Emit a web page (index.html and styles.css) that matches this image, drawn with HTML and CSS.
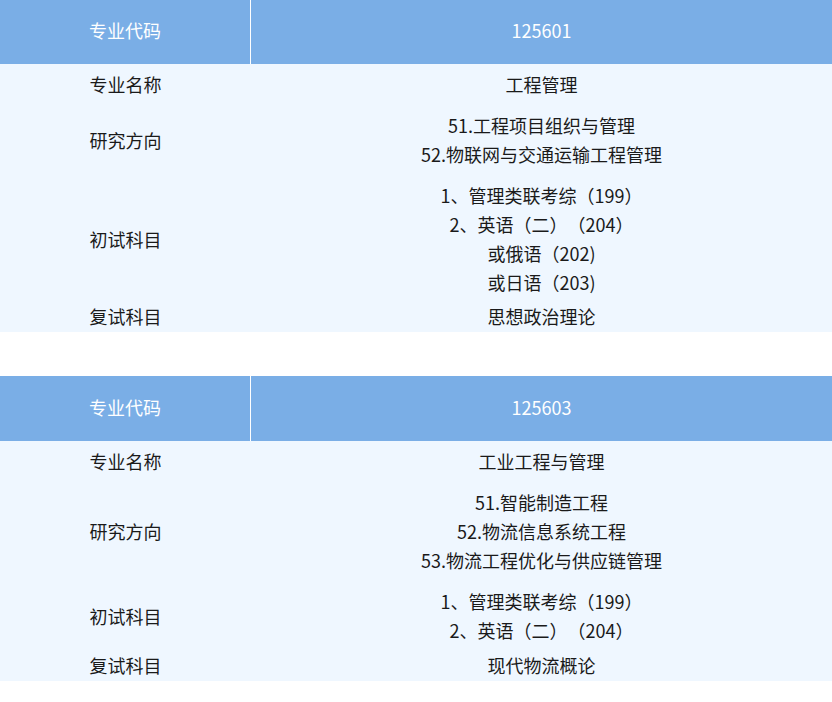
FILE: index.html
```html
<!DOCTYPE html>
<html lang="zh-CN">
<head>
<meta charset="utf-8">
<link rel="stylesheet" href="styles.css">
</head>
<body>
<div class="page">
  <div class="major">
    <div class="row head">
      <div class="label">专业代码</div>
      <div class="value">125601</div>
    </div>
    <div class="row">
      <div class="label">专业名称</div>
      <div class="value"><p>工程管理</p></div>
    </div>
    <div class="row">
      <div class="label">研究方向</div>
      <div class="value"><p>51.工程项目组织与管理</p><p>52.物联网与交通运输工程管理</p></div>
    </div>
    <div class="row">
      <div class="label">初试科目</div>
      <div class="value"><p>1、管理类联考综（199）</p><p>2、英语（二）（204）</p><p>或俄语（202)</p><p>或日语（203)</p></div>
    </div>
    <div class="row last">
      <div class="label">复试科目</div>
      <div class="value"><p>思想政治理论</p></div>
    </div>
  </div>

  <div class="major second">
    <div class="row head">
      <div class="label">专业代码</div>
      <div class="value">125603</div>
    </div>
    <div class="row">
      <div class="label">专业名称</div>
      <div class="value"><p>工业工程与管理</p></div>
    </div>
    <div class="row">
      <div class="label">研究方向</div>
      <div class="value"><p>51.智能制造工程</p><p>52.物流信息系统工程</p><p>53.物流工程优化与供应链管理</p></div>
    </div>
    <div class="row">
      <div class="label">初试科目</div>
      <div class="value"><p>1、管理类联考综（199）</p><p>2、英语（二）（204）</p></div>
    </div>
    <div class="row last">
      <div class="label">复试科目</div>
      <div class="value"><p>现代物流概论</p></div>
    </div>
  </div>
</div>
</body>
</html>
```

FILE: styles.css
```css
html, body {
  margin: 0;
  padding: 0;
  background: #ffffff;
}

.page {
  width: 832px;
  font-family: "Noto Sans CJK SC", "Noto Sans", sans-serif;
  font-size: 18px;
  color: #1a1a1a;
  text-spacing-trim: space-all;
}

.major {
  background: #eff7ff;
}

.major.second {
  margin-top: 44px;
}

.row {
  display: grid;
  grid-template-columns: 251px 1fr;
  padding: 6px 0;
  line-height: 29px;
}

.row .label,
.row .value {
  display: flex;
  flex-direction: column;
  justify-content: center;
  align-items: center;
  text-align: center;
}

.row p {
  margin: 0;
}

.row.head {
  background: #7aaee6;
  color: #ffffff;
  height: 64px;
  padding: 0;
  box-sizing: border-box;
}

.row.head .label {
  border-right: 1px solid #ffffff;
  padding-bottom: 3px;
}

.row.head .value {
  padding-bottom: 3px;
}

.second .row.head {
  height: 65px;
}

.row.last {
  padding: 0 0 2px;
  line-height: 27px;
}

.second .row.last {
  padding: 1px 0 2px;
}
```
